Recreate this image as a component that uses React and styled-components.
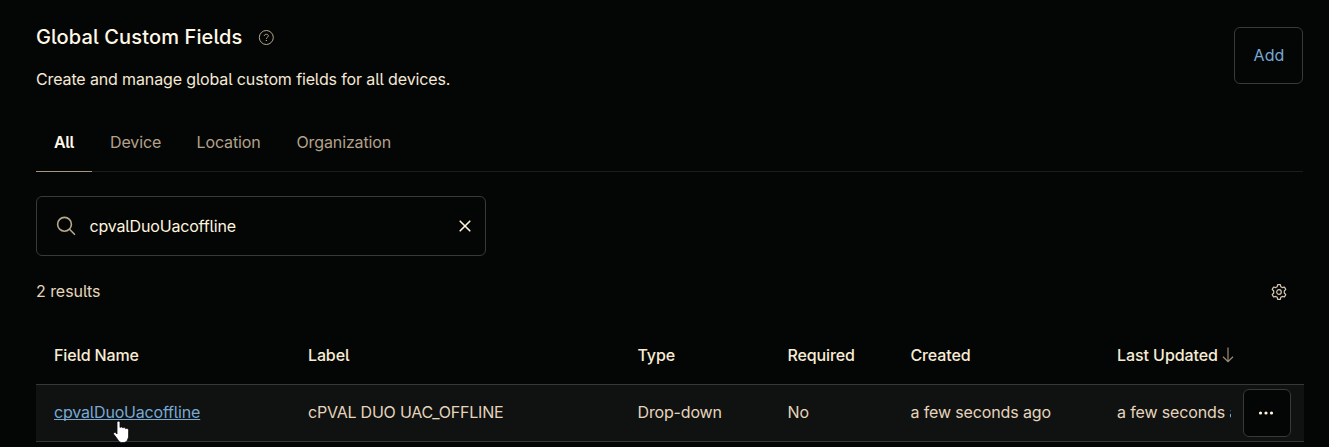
import React from 'react';
import styled, { createGlobalStyle } from 'styled-components';

const GlobalStyle = createGlobalStyle`
  * { box-sizing: border-box; }
  body {
    margin: 0;
    background: #040605;
    color: #efdfc8;
    font-family: Inter, "Liberation Sans", sans-serif;
    font-size: 16px;
    line-height: 24px;
    font-feature-settings: "cv05" 1;
    overflow: hidden;
  }
`;

const Page = styled.main`
  position: relative;
  height: 447px;
  padding: 25px 25px 0 36px;
  overflow: hidden;
`;

const Header = styled.header`
  display: flex;
  justify-content: space-between;
  height: 92px;
  padding-right: 1px;
`;

const TitleRow = styled.div`
  display: flex;
  align-items: center;
  gap: 16px;
  height: 24px;
`;

const Title = styled.h1`
  margin: 0;
  font-size: 20px;
  font-weight: 500;
  color: #fff8e7;
  letter-spacing: 0.13px;
`;

const Text = styled.span`
  display: inline-block;
  white-space: nowrap;
  font-weight: ${(p) => p.$weight || 400};
  color: ${(p) => p.$color || '#e6d5bd'};
  letter-spacing: ${(p) => p.$track || '-0.13px'};
`;

const Description = styled.p`
  margin: 18px 0 0;
`;

const AddButton = styled.button`
  width: 69px;
  height: 57px;
  margin-top: 2px;
  padding: 0 0 2px 1px;
  border: 1px solid #383a39;
  border-radius: 6px;
  background: transparent;
  font: inherit;
  font-feature-settings: inherit;
`;

const Tabs = styled.nav`
  display: flex;
  height: 55px;
  margin-right: 1px;
  border-bottom: 1px solid #1b1d1c;
`;

const Tab = styled.div`
  height: 55px;
  padding: 13px 18px 0;
  width: ${(p) => p.$width}px;
  border-bottom: 1px solid ${(p) => (p.$active ? '#a8967c' : 'transparent')};
`;

const Search = styled.div`
  display: flex;
  align-items: center;
  width: 450px;
  height: 60px;
  margin-top: 24px;
  padding: 0 14px 0 19px;
  border: 1px solid #383a39;
  border-radius: 6px;
`;

const Query = styled.div`
  flex: 1;
  margin-left: 13.5px;
`;

const Summary = styled.div`
  display: flex;
  align-items: center;
  justify-content: space-between;
  height: 24px;
  margin-top: 24px;
  padding-right: 17px;
`;

const Count = styled.div`
  padding-bottom: 2px;
`;

const Table = styled.section`
  margin-top: 22px;
`;

const columns = '254px 329.500px 150px 123px 206.500px 1fr';

const HeadRow = styled.div`
  display: grid;
  grid-template-columns: ${columns};
  align-items: center;
  height: 58px;
  padding-left: 18px;
`;

const Row = styled.div`
  display: grid;
  grid-template-columns: ${columns};
  align-items: center;
  height: 58px;
  padding-left: 18px;
  background: #101211;
  border-top: 1px solid #363837;
  border-bottom: 1px solid #363837;
`;

const Cell = styled.div`
  display: flex;
  align-items: center;
  min-width: 0;
`;

const DataCell = styled(Cell)`
  padding-bottom: 2px;
`;

const SortMark = styled.span`
  display: flex;
  margin-left: 4px;
`;

const Link = styled.a`
  color: #78a9d4;
  text-decoration: underline;
  text-decoration-thickness: 1px;
  text-decoration-skip-ink: none;
  text-underline-offset: 1px;
  letter-spacing: -0.18px;
`;

const Clip = styled.div`
  width: 114px;
  padding-bottom: 2px;
  overflow: hidden;
`;

const MoreButton = styled.button`
  display: flex;
  align-items: center;
  justify-content: center;
  width: 48px;
  height: 48px;
  margin-left: 12px;
  padding: 0 2px 0 0;
  flex: none;
  border: 1px solid #383a39;
  border-radius: 6px;
  background: #040605;
`;

const Pointer = styled.svg`
  position: absolute;
  left: 113px;
  top: 420px;
`;

const HelpIcon = () => (
  <svg width="16" height="16" viewBox="0 0 16 16" fill="none" stroke="#b7a68e">
    <circle cx="8.300" cy="8.500" r="7" />
    <path d="M6.300 7c0-1.200.8-1.700 2-1.700s2.100.6 2.100 1.600c0 1.300-2 1.300-2 2.900" />
    <path d="M7.800 11.500h1.200" strokeWidth="1.200" />
  </svg>
);

const SearchIcon = () => (
  <svg width="20" height="20" viewBox="0 0 20 20" fill="none" stroke="#b9a78e" strokeWidth="1.600" strokeLinecap="round">
    <circle cx="8.500" cy="8.300" r="6.900" />
    <path d="M13.500 13.300l5 5" />
  </svg>
);

const CloseIcon = () => (
  <svg width="12" height="12" viewBox="0 0 12 12" stroke="#fff4df" strokeWidth="1.600" strokeLinecap="round">
    <path d="M1.200 1.200l9.600 9.600M10.800 1.200L1.200 10.800" />
  </svg>
);

const GearIcon = () => (
  <svg width="16" height="16" viewBox="0 0 16 16" fill="none" stroke="#d8cab3" strokeWidth="1.200" strokeLinejoin="round">
    <path d="M6.700.700h2.600l.5 2 1.500.9 2.100-.6 1.400 2.400-1.500 1.600v2l1.500 1.600-1.400 2.400-2.100-.6-1.500.9-.5 2H6.700l-.5-2-1.500-.9-2.100.6-1.400-2.400L2.700 9V7L1.200 5.400 2.600 3l2.100.6 1.500-.9z" />
    <circle cx="8" cy="8" r="2.300" />
  </svg>
);

const SortIcon = () => (
  <svg width="12" height="16" viewBox="0 0 12 16" fill="none" stroke="#9b8d78" strokeWidth="1.200">
    <path d="M6 0.500v14M1 9.800l5 4.800 5-4.800" />
  </svg>
);

const DotsIcon = () => (
  <svg width="16" height="4" viewBox="0 0 16 4" fill="#fff4df">
    <circle cx="2.500" cy="2" r="1.600" />
    <circle cx="8" cy="2" r="1.600" />
    <circle cx="13.500" cy="2" r="1.600" />
  </svg>
);

const tabs = [
  { label: 'All', width: 56, active: true },
  { label: 'Device', width: 86.5 },
  { label: 'Location', width: 100 },
  { label: 'Organization', width: 131 },
];

const headings = ['Field Name', 'Label', 'Type', 'Required', 'Created'];

export default function App() {
  return (
    <>
      <GlobalStyle />
      <Page>
        <Header>
          <div>
            <TitleRow>
              <Title>Global Custom Fields</Title>
              <HelpIcon />
            </TitleRow>
            <Description><Text $color="#f5e9d5">Create and manage global custom fields for all devices.</Text></Description>
          </div>
          <AddButton><Text $color="#78a9d4" $track="0.1px">Add</Text></AddButton>
        </Header>
        <Tabs>
          {tabs.map((t) => (
            <Tab key={t.label} $width={t.width} $active={t.active}>
              <Text
                $weight={t.active ? 600 : 400}
                $color={t.active ? '#fff8e7' : '#b5a18a'}
                $track={t.active ? '-0.4px' : '-0.12px'}
              >
                {t.label}
              </Text>
            </Tab>
          ))}
        </Tabs>
        <Search>
          <SearchIcon />
          <Query><Text $color="#fff4df" $track="-0.17px">cpvalDuoUacoffline</Text></Query>
          <CloseIcon />
        </Search>
        <Summary>
          <Count><Text $track="-0.05px">2 results</Text></Count>
          <GearIcon />
        </Summary>
        <Table>
          <HeadRow>
            {headings.map((h) => (
              <Cell key={h}><Text $weight={500} $color="#f8ecd6">{h}</Text></Cell>
            ))}
            <Cell>
              <Text $weight={500} $color="#f8ecd6" $track="-0.07px">Last Updated</Text>
              <SortMark><SortIcon /></SortMark>
            </Cell>
          </HeadRow>
          <Row>
            <DataCell><Link>cpvalDuoUacoffline</Link></DataCell>
            <DataCell><Text $track="-0.22px">cPVAL DUO UAC_OFFLINE</Text></DataCell>
            <DataCell><Text $track="-0.15px">Drop-down</Text></DataCell>
            <DataCell><Text>No</Text></DataCell>
            <DataCell><Text>a few seconds ago</Text></DataCell>
            <Cell>
              <Clip><Text>a few seconds ago</Text></Clip>
              <MoreButton><DotsIcon /></MoreButton>
            </Cell>
          </Row>
        </Table>
        <Pointer width="18" height="24" viewBox="0 0 18 24" fill="#fff" stroke="#0b0d15" strokeWidth="0.800">
          <path d="M4 2.500C4 .700 7 .700 7 2.500V7.500c.6-1 2.700-.7 2.900.5.700-.8 2.600-.5 2.800.7.900-.7 2.900-.2 2.900 1.500V16c0 2-1 3-1.400 4.500C13 23.200 7 23.200 5.700 21 4.500 19 2.500 16.500.900 14.500-.100 13 1.500 11.700 2.800 12.800L4 14z" />
        </Pointer>
      </Page>
    </>
  );
}
